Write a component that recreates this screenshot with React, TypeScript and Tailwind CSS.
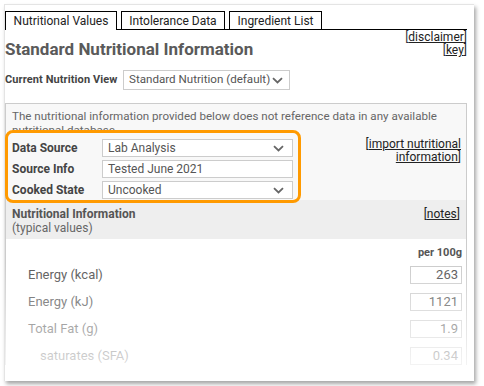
import React from "react";

const font = { fontFamily: "Roboto, 'Liberation Sans', sans-serif" };

const Chevron = () => (
    <svg width="11" height="7" viewBox="0 0 11 7" className="shrink-0">
        <path d="M1 1.2 L5.5 5.5 L10 1.2" fill="none" stroke="#666" strokeWidth="1.8" />
    </svg>
);

const rows = [
    { label: "Energy (kcal)", value: "263", indent: false },
    { label: "Energy (kJ)", value: "1121", indent: false },
    { label: "Total Fat (g)", value: "1.9", indent: false },
    { label: "saturates (SFA)", value: "0.34", indent: true },
];

const fields = [
    { label: "Data Source", value: "Lab Analysis", select: true },
    { label: "Source Info", value: "Tested June 2021", select: false },
    { label: "Cooked State", value: "Uncooked", select: true },
];

export default function App() {
    return (
        <div className="w-[484px] h-[386px] bg-white overflow-hidden text-[#555]" style={font}>
            <div className="relative ml-[4px] mt-[4px] w-[470px] h-[377px] bg-white border-l border-t border-[#e4e4e4] shadow-[2px_3px_4px_rgba(0,0,0,0.35)] overflow-hidden">
                <div className="pr-[7px] pt-[6px]">
                    {/* TABS */}
                    <div className="flex gap-[4px] border-b border-black h-[19px] items-end">
                        <div className="w-[112px] h-[19px] border border-black border-b-0 bg-white text-[12px] text-[#222] flex items-center justify-center -mb-px">
                            Nutritional Values
                        </div>
                        <div className="w-[104px] h-[18px] border border-black border-b-0 text-[12px] text-[#222] flex items-center justify-center">
                            Intolerance Data
                        </div>
                        <div className="w-[93px] h-[18px] border border-black border-b-0 text-[12px] text-[#222] flex items-center justify-center">
                            Ingredient List
                        </div>
                    </div>

                    {/* TITLE */}
                    <div className="flex justify-between">
                        <h1 className="text-[17px] font-bold text-[#5a5a5a] mt-[8px] leading-[22px] whitespace-nowrap">
                            Standard Nutritional Information
                        </h1>
                        <div className="flex flex-col items-end shrink-0 whitespace-nowrap text-[12px] leading-[13px] text-[#222] pt-[1px]">
                            <span><span className="text-[#334]">[</span><span className="underline">disclaimer</span>]</span>
                            <span><span className="text-[#334]">[</span><span className="underline">key</span>]</span>
                        </div>
                    </div>

                    {/* VIEW SELECT */}
                    <div className="flex items-center mt-[10px] h-[20px]">
                        <span className="text-[11px] font-bold text-[#444] w-[118px] whitespace-nowrap tracking-[0.1px]">Current Nutrition View</span>
                        <div className="w-[167px] h-[20px] border border-[#ccc] bg-white flex items-center justify-between pl-[5px] pr-[6px] text-[11.6px] text-[#555] whitespace-nowrap">
                            <span>Standard Nutrition (default)</span>
                            <Chevron />
                        </div>
                    </div>

                    {/* INFO BOX */}
                    <div className="mt-[13px] border border-[#ccc] border-b-0 bg-[#f8f8f8]">
                        <p className="text-[11.6px] leading-[14px] px-[6px] pt-[5px] text-[#666]">
                            The nutritional information provided below does not reference data in any available nutritional database.
                        </p>
                        <div className="flex justify-between -mt-[7px] -ml-px">
                            <div className="relative z-10 w-[296px] border-[3px] border-[#ff9a00] rounded-[8px] bg-[#f8f8f8] px-[4px] pt-[5px] flex flex-col gap-[1px]">
                                {fields.map((f) => (
                                    <div key={f.label} className="flex items-center h-[20px]">
                                        <span className="w-[90px] text-[12px] font-bold text-[#444]">{f.label}</span>
                                        <div className="w-[191px] h-[18px] border border-[#ccc] bg-white flex items-center justify-between pl-[5px] pr-[8px] text-[12px] text-[#555]">
                                            <span>{f.value}</span>
                                            {f.select && <Chevron />}
                                        </div>
                                    </div>
                                ))}
                            </div>
                            <div className="text-[12px] leading-[13px] text-right text-[#222] pt-[8px] pr-[5px]">
                                [<span className="underline">import nutritional</span>
                                <br />
                                <span className="underline">information</span>]
                            </div>
                        </div>

                        {/* NUTRITIONAL INFO HEADER */}
                        <div className="bg-[#eeeeee] -mt-[3px] pt-[7px] pb-[4px] px-[6px] flex justify-between text-[12px] leading-[14px]">
                            <div>
                                <div className="font-bold text-[#555]">Nutritional Information</div>
                                <div className="text-[#666]">(typical values)</div>
                            </div>
                            <span className="text-[#222]">[<span className="underline">notes</span>]</span>
                        </div>

                        <div className="bg-white">
                            <div className="text-right text-[11px] leading-[14px] font-bold pr-[4px] pt-[7px] text-[#555]">per 100g</div>
                            <div className="flex flex-col gap-[9px] mt-[6px]">
                                {rows.map((r) => (
                                    <div key={r.label} className="flex items-center justify-between h-[18px] pr-[4px]">
                                        <span className={`text-[13px] text-[#555] ${r.indent ? "pl-[34px]" : "pl-[22px]"}`}>{r.label}</span>
                                        <div className="w-[52px] h-[18px] border border-[#ccc] bg-white text-right text-[13px] px-[3px] leading-[16px] text-[#555]">
                                            {r.value}
                                        </div>
                                    </div>
                                ))}
                            </div>
                        </div>
                    </div>
                </div>

                {/* FADE */}
                <div className="absolute left-0 right-0 bottom-0 h-[118px] bg-gradient-to-b from-white/0 to-white/90 pointer-events-none" />
            </div>
        </div>
    );
}
